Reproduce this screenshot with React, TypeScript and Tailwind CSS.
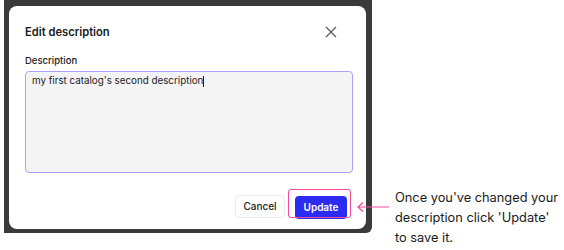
import React from 'react';

export default function App() {
  return (
    <div className="w-[564px] h-[250px] bg-white flex items-start" style={{ fontFamily: 'Inter, "Liberation Sans", sans-serif' }}>
      {/* Dark backdrop frame around the dialog */}
      <div className="ml-[4px] w-[368px] h-[233px] bg-[#3a3a3a] rounded-br-[6px] pl-[5px] pr-[6px] pt-[6px] pb-[4px]">
        <div className="w-full h-full bg-white rounded-[8px] px-[16px] pt-[15px] flex flex-col">
          <div className="flex items-center justify-between h-[22px]">
            <h2 className="text-[11.2px] font-semibold text-[#1a1a1a]">Edit description</h2>
            <svg width="12" height="12" viewBox="0 0 12 12" className="mr-[13px]">
              <path d="M1 1 L11 11 M11 1 L1 11" stroke="#555" strokeWidth="1.1" />
            </svg>
          </div>
          <label className="mt-[11px] text-[9.5px] leading-[14px] font-medium text-[#222]">Description</label>
          <div className="mt-[3px] h-[102px] w-[328px] bg-[#f4f4f4] border border-[#a8a4ff] rounded-[4px] px-[6px] pt-[1px] text-[9.8px] leading-[16px]">
            <span className="text-[#222]">my first catalog's second description</span>
            <span className="inline-block w-px h-[11px] bg-[#222] align-middle" />
          </div>
          <div className="mt-[20px] flex justify-end items-center gap-[10px] pr-[3px]">
            <button className="w-[50px] h-[23px] rounded-[4px] border border-[#ececec] bg-white text-[10px] font-medium text-[#222]">
              Cancel
            </button>
            {/* Highlighted update button */}
            <div className="relative">
              <button className="w-[52px] h-[23px] rounded-[4px] bg-[#2b2bf2] text-[10px] font-semibold text-white">
                Update
              </button>
              <div className="absolute -left-[7px] -top-[4px] w-[63px] h-[29px] border border-[#f44b9c] rounded-[3px]" />
            </div>
          </div>
        </div>
      </div>

      <div className="relative flex-1 h-full">
        {/* Arrow pointing to Update */}
        <svg className="absolute left-[-16px] top-[201px]" width="34" height="12" viewBox="0 0 34 12">
          <path d="M2 6 H33 M7 1.5 L2 6 L7 10.5" stroke="#f44b9c" strokeWidth="1.2" fill="none" />
        </svg>
        <p className="absolute left-[23px] top-[188px] w-[166px] text-[12.8px] leading-[20px] text-[#1a1a1a]">
          Once you've changed your description click 'Update' to save it.
        </p>
      </div>
    </div>
  );
}
